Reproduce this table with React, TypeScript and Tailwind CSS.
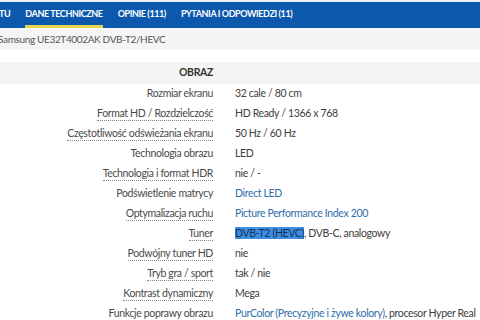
import React from "react";

const rows: { label: string; dotted: boolean; value: React.ReactNode }[] = [
  { label: "Rozmiar ekranu", dotted: false, value: "32 cale / 80 cm" },
  { label: "Format HD / Rozdzielczość", dotted: true, value: "HD Ready / 1366 x 768" },
  { label: "Częstotliwość odświeżania ekranu", dotted: true, value: "50 Hz / 60 Hz" },
  { label: "Technologia obrazu", dotted: false, value: "LED" },
  { label: "Technologia i format HDR", dotted: true, value: "nie / -" },
  {
    label: "Podświetlenie matrycy",
    dotted: false,
    value: <span className="text-[#2f6ea8]">Direct LED</span>,
  },
  {
    label: "Optymalizacja ruchu",
    dotted: true,
    value: <span className="text-[#2f6ea8]">Picture Performance Index 200</span>,
  },
  {
    label: "Tuner",
    dotted: true,
    value: (
      <>
        <span className="bg-[#3d8de0] text-[#14325c]">DVB-T2 (HEVC)</span>, DVB-C, analogowy
      </>
    ),
  },
  { label: "Podwójny tuner HD", dotted: true, value: "nie" },
  { label: "Tryb gra / sport", dotted: true, value: "tak / nie" },
  { label: "Kontrast dynamiczny", dotted: true, value: "Mega" },
  {
    label: "Funkcje poprawy obrazu",
    dotted: false,
    value: (
      <>
        <span className="text-[#2f6ea8]">PurColor (Precyzyjne i żywe kolory)</span>, procesor Hyper Real
      </>
    ),
  },
];

const tabs = [
  { name: "TU", active: false },
  { name: "DANE TECHNICZNE", active: true },
  { name: "OPINIE (111)", active: false },
  { name: "PYTANIA I ODPOWIEDZI (11)", active: false },
];

export default function App() {
  return (
    <div className="w-[480px] h-[320px] overflow-hidden bg-white font-['Lato',_sans-serif]">
      {/* tabs */}
      <div className="h-[28px] border-t-2 border-[#e9eef5] bg-[#0b58ad] flex items-stretch gap-[15px] ml-[-1px]">
        {tabs.map((t) => (
          <div
            key={t.name}
            className={`flex items-center text-[9px] font-bold tracking-[-0.4px] text-white border-b-[3px] ${
              t.active ? "border-[#e8d34a]" : "border-transparent"
            }`}
          >
            {t.name}
          </div>
        ))}
      </div>

      {/* product name */}
      <div className="h-[22px] bg-[#f5f5f5] flex items-center text-[10px] tracking-[-0.35px] text-[#555] ml-[-2px] whitespace-nowrap">
        Samsung UE32T4002AK DVB-T2/HEVC
      </div>

      {/* spec table */}
      <div className="mt-[12px] text-[10.5px] tracking-[-0.35px]">
        <div className="h-[22px] bg-[#f4f4f4] grid grid-cols-[213px_1fr] items-center">
          <div className="text-right font-bold text-[#333]">OBRAZ</div>
          <div />
        </div>
        {rows.map((r) => (
          <div key={r.label} className="h-[20px] grid grid-cols-[213px_1fr] gap-x-[22px] items-center whitespace-nowrap">
            <div className="text-right text-[#4a4a4a]">
              <span className={r.dotted ? "border-b border-dotted border-[#888] pb-[1px]" : ""}>{r.label}</span>
            </div>
            <div className="text-[#404040]">{r.value}</div>
          </div>
        ))}
      </div>
    </div>
  );
}
